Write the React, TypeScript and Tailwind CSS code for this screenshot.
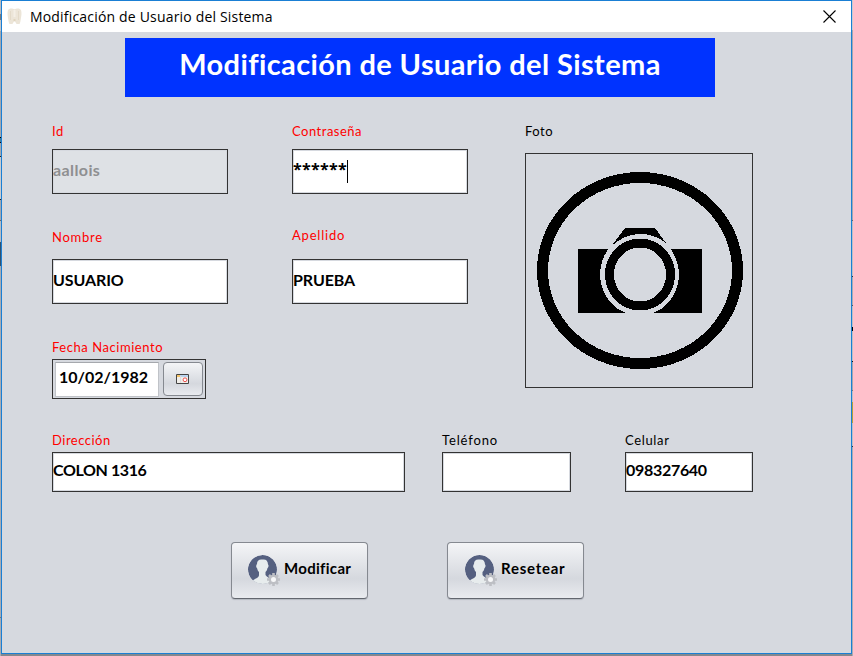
import React from 'react';

type Segment = { h: number; color: string };

const leftEdge: Segment[] = [
  { h: 14, color: '#b9bcc2' }, { h: 6, color: '#77797d' }, { h: 11, color: '#c4c6ca' },
  { h: 106, color: '#a3a7af' }, { h: 1, color: '#000000' }, { h: 4, color: '#3f7f9e' },
  { h: 1, color: '#05051c' }, { h: 13, color: '#a3a7af' }, { h: 1, color: '#222222' },
  { h: 42, color: '#c9cbd0' }, { h: 1, color: '#222222' }, { h: 20, color: '#a3a7af' },
  { h: 1, color: '#666666' }, { h: 21, color: '#b9bcc2' }, { h: 24, color: '#31526f' },
  { h: 351, color: '#a9acb3' }, { h: 1, color: '#777777' }, { h: 38, color: '#a9acb3' },
];

const rightEdge: Segment[] = [
  { h: 30, color: '#c9cbd0' }, { h: 190, color: '#a3a7af' }, { h: 1, color: '#666666' },
  { h: 55, color: '#bcbfc5' }, { h: 1, color: '#333333' }, { h: 28, color: '#a9acb3' },
  { h: 1, color: '#555555' }, { h: 21, color: '#bcbfc5' }, { h: 4, color: '#000000' },
  { h: 30, color: '#bcbfc5' }, { h: 1, color: '#111111' }, { h: 28, color: '#a3a7af' },
  { h: 1, color: '#777777' }, { h: 11, color: '#bcbfc5' }, { h: 21, color: '#b5a238' },
  { h: 23, color: '#bcbfc5' }, { h: 1, color: '#333333' }, { h: 209, color: '#a9acb3' },
];

function Edge({ segments }: { segments: Segment[] }) {
  return (
    <div className="flex h-[656px] w-px shrink-0 flex-col overflow-hidden">
      {segments.map((s, i) => (
        <div key={i} className="w-px shrink-0" style={{ height: s.h, backgroundColor: s.color }} />
      ))}
    </div>
  );
}

function Label({ children, optional = false, className = 'tracking-[0.5px]' }: { children: React.ReactNode; optional?: boolean; className?: string }) {
  return (
    <div className={`h-[18px] whitespace-nowrap text-[13px] leading-[18px] ${optional ? 'text-black' : 'text-[#ff0000]'} ${className}`}>
      {children}
    </div>
  );
}

function Field({ children, disabled = false, className = '' }: { children?: React.ReactNode; disabled?: boolean; className?: string }) {
  return (
    <div className={`flex items-center border border-[#333333] whitespace-nowrap font-bold shadow-[inset_0_0_0_1px_#d6d9df] ${disabled ? 'bg-[#dee1e5] text-[#8e8f91]' : 'bg-white text-black'} ${className}`}>
      {children}
    </div>
  );
}

function Tooth() {
  return (
    <svg width="15" height="17" viewBox="0 0 15 17">
      <path d="M1 2C2 .3 4.500 0 6 .8c1 .5 2 .5 3 0C11 0 13 .3 14 2c1 3 .3 6-.2 9-.2 2-.6 3.500-1.200 5h-3c-.8-1-1-2.500-2.100-2.500S6.200 15 5.400 16h-3C1.800 14.500 1.400 13 1.200 11 .700 8 0 5 1 2z" fill="#ece5d8" />
      <path d="M3.500 3v9M11.500 3v9" stroke="#e3dac9" fill="none" />
      <path d="M7.500 2v7" stroke="#f4efe6" strokeWidth="2" />
      <path d="M6.500 11h2v2h-2z" fill="#e0d4bf" />
    </svg>
  );
}

function Camera() {
  return (
    <svg width="226" height="233" viewBox="526 154 226 233" shapeRendering="crispEdges">
      <path fillRule="evenodd" d="M537 270.500a103 98.500 0 1 0 206 0a103 98.500 0 1 0-206 0zM548 270.500a92 87.500 0 1 1 184 0a92 87.500 0 1 1-184 0z" />
      <path d="M578 249h124v64H578z" />
      <ellipse cx="639.500" cy="274.500" rx="39.500" ry="41" fill="#d6d9df" />
      <path d="M611.500 246L625 228h30l11 15c-16-12.500-38-12.500-54.500 3z" />
      <ellipse cx="640" cy="274.500" rx="30.500" ry="31.500" fill="none" stroke="#000" strokeWidth="9" />
    </svg>
  );
}

function CalendarIcon() {
  return (
    <svg width="14" height="12" viewBox="0 0 14 12">
      <path d="M.5 1.500h12v9H.5z" fill="#f1eee9" stroke="#444" />
      <path d="M1 2h3v2H1z" fill="#f4c46a" />
      <path d="M4 2h8v2H4z" fill="#b9d4ef" />
      <path d="M4.500 3v7" stroke="#ddd" />
      <circle cx="9" cy="6.800" r="1.900" fill="#fff" stroke="#ef5350" />
    </svg>
  );
}

function UserGear() {
  return (
    <svg width="33" height="33" viewBox="0 0 33 33">
      <defs>
        <clipPath id="avatar"><circle cx="14.500" cy="14.500" r="14.500" /></clipPath>
      </defs>
      <g clipPath="url(#avatar)">
        <circle cx="14.500" cy="14.500" r="14.500" fill="#556080" />
        <path d="M9 9C9 5.500 11 4 14.500 4.500 18 4 20 6 20 9.500c1 .5.500 3-.5 3.500-.3 2-1 3-2 4v3c1 2 4 3 7 4v6H2c1-4 3-5 7-7 1.500-1 2-2 2-3v-3c-1-1-1.500-2-2-4-1.200-.5-1-3 0-4z" fill="#e7eced" />
      </g>
      <g transform="translate(25.500 24.500)">
        <g stroke="#bdbfc4" strokeWidth="2.600">
          <path d="M0-6.500V6.500M-6.500 0H6.500M-4.500-4.500l9 9M4.500-4.500l-9 9" />
        </g>
        <circle r="4.800" fill="#bdbfc4" />
        <circle r="2.500" fill="#f7f8f9" />
      </g>
    </svg>
  );
}

function ActionButton({ children, className }: { children: React.ReactNode; className: string }) {
  return (
    <button className={`flex h-[57px] w-[137px] items-start rounded-[4px] border border-[#858990] border-b-[#62666e] bg-linear-to-b from-[#f4f5f7] via-[#d5d8de] via-65% to-[#e9ebef] pt-[12px] shadow-[0_1px_1px_#b4b8c0] ${className}`}>
      <UserGear />
      <span className="ml-[3px] mt-[3px] whitespace-nowrap text-[15px] font-bold leading-[20px] text-black">{children}</span>
    </button>
  );
}

export default function App() {
  return (
    <div className="flex h-[656px] w-[853px] overflow-hidden bg-[#85888e] font-['Lato','Open_Sans',sans-serif]">
      <Edge segments={leftEdge} />
      <div className="flex h-[654px] w-[851px] shrink-0 flex-col border border-[#1a7fd4] bg-[#d6d9df]">
        <header className="flex h-[31px] shrink-0 items-center bg-white pl-[5px] pr-[15px]">
          <Tooth />
          <h1 className="ml-[8px] grow whitespace-nowrap font-['Open_Sans','Noto_Sans',sans-serif] text-[14px] leading-[20px] tracking-[0.18px] text-black">
            Modificación de Usuario del Sistema
          </h1>
          <svg width="13" height="13" viewBox="0 0 13 13">
            <path d="M.5.500l12 12M12.500.500l-12 12" stroke="#000" strokeWidth="1.100" />
          </svg>
        </header>

        <main className="flex flex-col pt-[6px]">
          <div className="ml-[123px] flex h-[59px] w-[590px] items-center justify-center bg-[#0033ff] pb-[7px]">
            <h2 className="whitespace-nowrap text-[29px] font-bold tracking-[0.38px] text-white">Modificación de Usuario del Sistema</h2>
          </div>

          <div className="mt-[25px] flex pl-[50px]">
            <div className="w-[473px]">
              <div className="flex gap-[64px]">
                <div className="w-[176px]">
                  <Label>Id</Label>
                  <Field disabled className="mt-[9px] h-[45px] pb-[3px] text-[16px] tracking-[0.4px]">aallois</Field>
                </div>
                <div className="w-[176px]">
                  <Label>Contraseña</Label>
                  <Field className="mt-[9px] h-[45px] text-[16px]">
                    <span className="-mt-[6px] font-['Open_Sans',sans-serif] text-[16px] tracking-[0.3px]">******</span>
                    <span className="h-[23px] w-px bg-black" />
                  </Field>
                </div>
              </div>
              <div className="mt-[32px] flex gap-[64px]">
                <div className="w-[176px]">
                  <Label className="mt-[2px] tracking-[0.75px]">Nombre</Label>
                  <Field className="mt-[13px] h-[45px] pb-[4px] text-[16px] tracking-[-0.1px]">USUARIO</Field>
                </div>
                <div className="w-[176px]">
                  <Label className="tracking-[0.8px]">Apellido</Label>
                  <Field className="mt-[15px] h-[45px] pb-[4px] text-[16px] tracking-[-0.1px]">PRUEBA</Field>
                </div>
              </div>
              <Label className="mt-[34px] tracking-[0.55px]">Fecha Nacimiento</Label>
              <div className="mt-[3px] flex h-[40px] w-[154px] items-center border border-[#333333] pl-[2px]">
                <div className="flex h-[35px] w-[104px] items-center border border-[#c0c3c8] border-t-[#a5a8ad] bg-white pb-[4px] pl-[3px] text-[16px] font-bold whitespace-nowrap">10/02/1982</div>
                <button className="ml-[4px] flex h-[34px] w-[40px] items-center justify-center rounded-[4px] border border-[#858990] bg-linear-to-b from-[#f4f5f7] via-[#d5d8de] via-65% to-[#e9ebef]">
                  <CalendarIcon />
                </button>
              </div>
            </div>
            <div>
              <Label optional>Foto</Label>
              <div className="mt-[13px] h-[235px] w-[228px] border border-[#333333]">
                <Camera />
              </div>
            </div>
          </div>

          <div className="mt-[32px] flex pl-[50px]">
            <div className="w-[353px]">
              <Label>Dirección</Label>
              <Field className="mt-[3px] h-[40px] pb-[4px] text-[16px] tracking-[-0.4px]">COLON 1316</Field>
            </div>
            <div className="ml-[37px] w-[129px]">
              <Label optional className="tracking-[0.85px]">Teléfono</Label>
              <Field className="mt-[3px] h-[40px]" />
            </div>
            <div className="ml-[54px] w-[128px]">
              <Label optional className="tracking-[0.65px]">Celular</Label>
              <Field className="mt-[3px] h-[40px] pb-[4px] text-[16px] tracking-[-0.3px]">098327640</Field>
            </div>
          </div>

          <div className="mt-[50px] flex gap-[79px] pl-[229px]">
            <ActionButton className="pl-[16px] tracking-[0.3px]">Modificar</ActionButton>
            <ActionButton className="pl-[17px] tracking-[0.75px]">Resetear</ActionButton>
          </div>
        </main>
      </div>
      <Edge segments={rightEdge} />
    </div>
  );
}
